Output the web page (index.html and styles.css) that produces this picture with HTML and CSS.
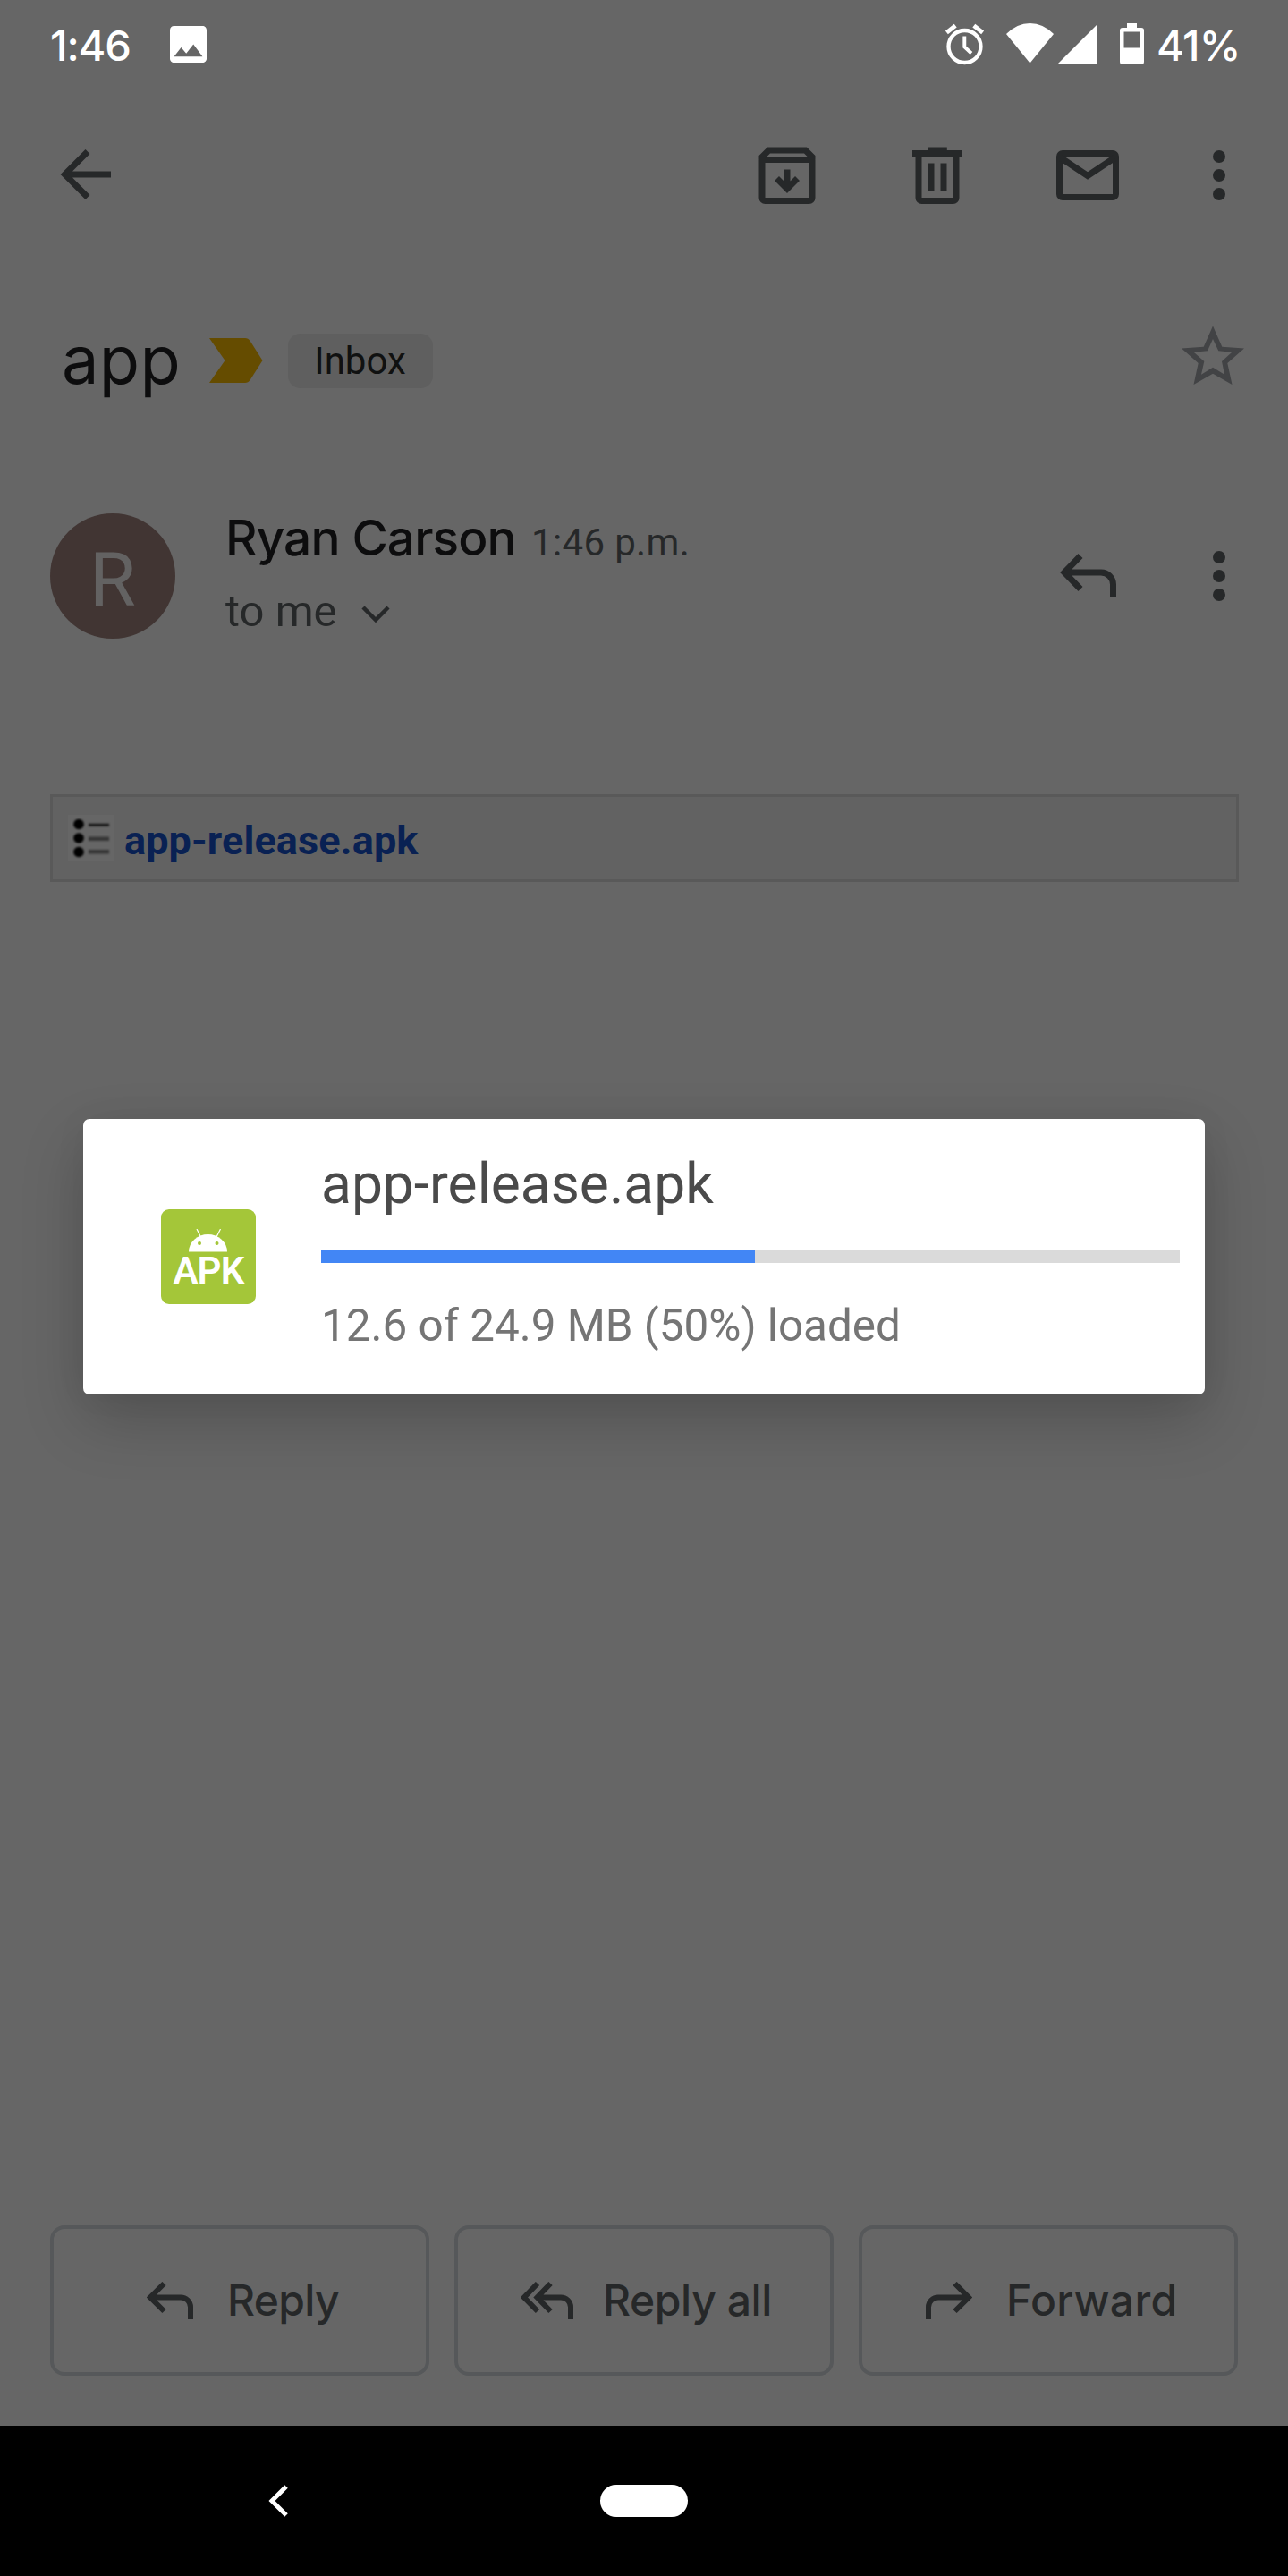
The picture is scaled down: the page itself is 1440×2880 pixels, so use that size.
FILE: index.html
```html
<!DOCTYPE html>
<html lang="en">
<head>
<meta charset="utf-8">
<title>app</title>
<link rel="stylesheet" href="styles.css">
</head>
<body>
<div class="screen">
  <header class="status">
    <div class="status-left">
      <span class="clock">1:46</span>
      <svg class="i-image" viewBox="3 3 18 18"><path fill="currentColor" d="M21 19V5c0-1.100-.9-2-2-2H5c-1.100 0-2 .9-2 2v14c0 1.100.9 2 2 2h14c1.100 0 2-.9 2-2zM8.500 13.500l2.500 3.010L14.500 12l4.500 6H5l3.500-4.500z"/></svg>
    </div>
    <div class="status-right">
      <svg class="i-alarm" viewBox="0 0 43 45" fill="none" stroke="currentColor"><circle cx="21.500" cy="25" r="18" stroke-width="4.300"/><path stroke-width="4.800" d="M1.400 9.300L11.200 1.600M41.600 9.300L31.800 1.600"/><path stroke-width="3.900" d="M21.300 13.500V25.500L29 32.500"/></svg>
      <svg class="i-wifi" viewBox="0 0 53 45"><path fill="currentColor" d="M0 12Q12 0 26.500 0T53 12L26.500 44.500Z"/></svg>
      <svg class="i-signal" viewBox="0 0 44 44"><path fill="currentColor" d="M44 0V44H0Z"/></svg>
      <svg class="i-battery" viewBox="0 0 27 46"><path fill="currentColor" fill-rule="evenodd" d="M8 0h11v5h5a3 3 0 0 1 3 3v35a3 3 0 0 1-3 3H3a3 3 0 0 1-3-3V8a3 3 0 0 1 3-3h5zM4.500 9.500V27.500H22.800V9.500z"/></svg>
      <span class="percent">41%</span>
    </div>
  </header>

  <nav class="toolbar">
    <svg class="ic" viewBox="0 0 84 84" fill="none" stroke="currentColor" stroke-width="7"><path d="M70 42H19M44 16.500L18.500 42L44 67.500"/></svg>
    <div class="actions">
      <svg class="ic" viewBox="0 0 84 84" fill="none" stroke="currentColor" stroke-width="7"><path d="M14 24.500V67a3.500 3.500 0 0 0 3.500 3.500h49A3.500 3.500 0 0 0 70 67V24.500M11 24.500H73"/><path d="M14 24.500V21.500L21.500 14H62.500L70 21.500V24.500"/><path d="M42 35.500V56M30.500 45.500L42 57L53.500 45.500"/></svg>
      <svg class="ic" viewBox="0 0 84 84" fill="none" stroke="currentColor" stroke-width="7"><path d="M14 17.500H70M31.200 14H52.800M21 17.500V67a3.500 3.500 0 0 0 3.500 3.500h35A3.500 3.500 0 0 0 63 67V17.500M35 28.500V60M49 28.500V60"/></svg>
      <svg class="ic" viewBox="0 0 84 84" fill="none" stroke="currentColor" stroke-width="7"><rect x="10.500" y="17.500" width="63" height="49" rx="3.500"/><path d="M12 22.500L42 42.500L72 22.500"/></svg>
      <svg class="dots" viewBox="0 0 14 56" fill="currentColor"><circle cx="7" cy="7" r="7"/><circle cx="7" cy="28" r="7"/><circle cx="7" cy="49" r="7"/></svg>
    </div>
  </nav>

  <section class="subject">
    <span class="title">app</span>
    <svg class="marker" viewBox="0 0 60 50"><path fill="currentColor" d="M0 0H40Q43.500 0 45.500 3L59.500 25L45.500 47Q43.500 50 40 50H0L17.500 25Z"/></svg>
    <span class="chip">Inbox</span>
    <svg class="star" viewBox="1321 364 70 67"><path fill="currentColor" fill-rule="evenodd" d="M1356 364.500L1366.300 387.700L1391 389.500L1372.300 406L1377.500 430L1356 417.700L1334.500 430L1339.700 406L1321 389.500L1345.700 387.700ZM1356 379L1350 392.300L1334.700 393.700L1346.300 404L1343 418.700L1356 410.700L1369 418.700L1366 404L1377.300 393.700L1362.300 392.300Z"/></svg>
  </section>

  <section class="message">
    <div class="avatar">R</div>
    <div class="who">
      <div class="line"><span class="name">Ryan Carson</span><span class="time">1:46 p.m.</span></div>
      <div class="to"><span>to me</span><svg class="chev" viewBox="0 0 32 20" fill="none" stroke="currentColor" stroke-width="4.500"><path d="M2 2L16 16L30 2"/></svg></div>
    </div>
    <svg class="i-reply" viewBox="0 0 63 50" fill="none" stroke="currentColor" stroke-width="7"><path d="M23 2.500L5 21L23 39.500M5 21H46A13.500 13.500 0 0 1 59.500 34.500V49"/></svg>
    <svg class="dots" viewBox="0 0 14 56" fill="currentColor"><circle cx="7" cy="7" r="7"/><circle cx="7" cy="28" r="7"/><circle cx="7" cy="49" r="7"/></svg>
  </section>

  <a class="attachment">
    <svg class="file" viewBox="0 0 52 52"><rect width="52" height="52" fill="#666"/><g class="soft"><circle cx="12" cy="10.500" r="5.800"/><circle cx="12" cy="26" r="5.800"/><circle cx="12" cy="41.500" r="5.800"/><path d="M23 11.300H46" stroke="#161616" stroke-width="3"/><path d="M23 26.700H46M23 41.300H46" stroke="#363636" stroke-width="4.500"/></g></svg>
    <span class="attachment-name">app-release.apk</span>
  </a>

  <footer class="replies">
    <div class="btn reply"><svg width="52" height="42" viewBox="0 0 52 42" fill="none" stroke="currentColor" stroke-width="6"><path d="M19.500 2L4 17.500L19.500 33M4 17.500H38A11 11 0 0 1 49 28.500V42"/></svg><span>Reply</span></div>
    <div class="btn all"><svg width="59" height="42" viewBox="0 0 59 42" fill="none" stroke="currentColor" stroke-width="6"><path d="M19 2L4 17.500L19 33M33.500 2L18.500 17.500L33.500 33M18.500 17.500H45A11 11 0 0 1 56 28.500V42"/></svg><span>Reply all</span></div>
    <div class="btn forward"><svg width="52" height="42" viewBox="0 0 52 42" fill="none" stroke="currentColor" stroke-width="6"><path d="M32.500 2L48 17.500L32.500 33M48 17.500H14A11 11 0 0 0 3 28.500V42"/></svg><span>Forward</span></div>
  </footer>

  <div class="navbar">
    <svg class="nav-back" viewBox="0 0 22 36" fill="none" stroke="currentColor" stroke-width="5"><path d="M20 2L4 18L20 34"/></svg>
    <span class="pill"></span>
  </div>

  <div class="dialog">
    <div class="apk">
      <svg class="robot" viewBox="0 0 44 26"><path fill="#fff" d="M0 25.500A21.500 19.500 0 0 1 43 25.500Z"/><path d="M9 0L13.500 9M35.500 0L31 9" stroke="#fff" stroke-width="1.200"/><circle cx="12" cy="16" r="2" fill="#a4c639"/><circle cx="31.500" cy="16" r="2" fill="#a4c639"/></svg>
      <span>APK</span>
    </div>
    <div class="download">
      <div class="fname">app-release.apk</div>
      <div class="track"><div class="fill"></div></div>
      <div class="info">12.6 of 24.9 MB (50%) loaded</div>
    </div>
  </div>
</div>
</body>
</html>
```

FILE: styles.css
```css
* { box-sizing: border-box; }
body { margin: 0; background: #666; font-family: Roboto, "Liberation Sans", sans-serif; }
svg { display: block; flex: none; }
.screen { position: relative; width: 1440px; height: 2880px; display: flex; flex-direction: column; background: #666; color: #262829; overflow: hidden; white-space: nowrap; }

/* Status bar */
.status { height: 98px; padding: 0 56px; display: flex; justify-content: space-between; color: #fff; font: 500 47px/98px Inter, sans-serif; }
.status-left, .status-right { display: flex; align-items: flex-start; }
.clock { width: 134px; letter-spacing: -1.1px; padding-top: 2px; }
.i-image { width: 41px; height: 41px; margin-top: 29px; }
.i-alarm { width: 43px; height: 45px; margin: 26.5px 25.5px 0 0; overflow: visible; }
.i-wifi { width: 53px; height: 45px; margin: 26px 5px 0 0; }
.i-signal { width: 44px; height: 44px; margin: 26.5px 25px 0 0; }
.i-battery { width: 27px; height: 46px; margin: 26px 14px 0 0; }
.percent { width: 91px; letter-spacing: -.7px; padding-top: 2px; }

/* Toolbar */
.toolbar { height: 196px; padding: 0 70px 0 54px; display: flex; justify-content: space-between; align-items: center; }
.ic { width: 84px; height: 84px; }
.toolbar > .ic { margin-bottom: 3px; }
.actions { display: flex; align-items: center; gap: 84px; }
.actions .dots { margin-left: 14px; }
.dots { width: 14px; height: 56px; }

/* Subject */
.subject { height: 218px; padding: 0 49px 0 69px; display: flex; align-items: center; }
.title { width: 165px; font: 400 74px/100px Inter, sans-serif; letter-spacing: .3px; color: #0d0d0e; padding-bottom: 2px; }
.marker { width: 60px; height: 50px; color: #654c00; margin-right: 27.5px; }
.chip { width: 162px; height: 61px; border-radius: 14px; background: #5f5f5f; color: #101111; font-size: 42px; line-height: 61px; text-align: center; }
.star { width: 70px; height: 67px; margin: 0 0 12px auto; color: #424345; }

/* Message header */
.message { margin-top: 62px; height: 140px; padding: 0 70px 0 56px; display: flex; align-items: center; }
.avatar { width: 140px; height: 140px; border-radius: 50%; background: #413533; color: #636262; font-size: 84px; line-height: 149px; text-align: center; }
.who { flex: 1; margin-left: 56px; }
.line { height: 79px; display: flex; align-items: baseline; }
.name { font: 500 55px/56px Inter, sans-serif; letter-spacing: -.9px; color: #0d0d0e; width: 342px; }
.time { font-size: 42px; line-height: 50px; letter-spacing: .35px; }
.to { height: 63px; line-height: 60px; font-size: 49px; display: flex; align-items: center; gap: 27px; }
.chev { width: 32px; height: 20px; margin-top: 6px; }
.i-reply { width: 63px; height: 50px; margin-right: 108px; }

/* Attachment */
.attachment { margin: 174px 55px 0 56px; height: 98px; padding-left: 17px; border: 3px solid #595959; background: #626262; display: flex; align-items: center; gap: 11px; font-weight: 700; font-size: 45px; letter-spacing: .1px; color: #092153; }
.attachment-name { padding-top: 5px; }
.file { width: 52px; height: 52px; }
.soft { filter: blur(1.2px); }

/* Reply buttons */
.replies { margin-top: auto; padding: 0 56px 56px; display: grid; grid-template-columns: repeat(3, 424px); gap: 28px; font: 500 48px/58px Inter, sans-serif; }
.btn { height: 168px; border: 4px solid #56585a; border-radius: 16px; display: flex; align-items: center; }
.reply { padding-left: 104px; gap: 38px; letter-spacing: -.7px; }
.all { padding-left: 70px; gap: 33px; letter-spacing: -.4px; }
.forward { padding-left: 71px; gap: 38px; letter-spacing: .4px; }

/* System navigation */
.navbar { height: 168px; background: #000; color: #fff; display: flex; align-items: center; }
.nav-back { width: 22px; height: 36px; margin-left: 300px; }
.pill { width: 98px; height: 36px; border-radius: 18px; background: #fff; margin-left: 349px; }

/* Download dialog */
.dialog { position: absolute; left: 93px; top: 1251px; width: 1254px; height: 308px; padding: 0 28px 0 87px; border-radius: 7px; background: #fff; display: flex; align-items: center; box-shadow: 0 28px 70px rgba(0,0,0,.2), 0 0 40px rgba(0,0,0,.04); }
.apk { width: 106px; height: 106px; border-radius: 9px; background: #a4c639; color: #fff; font-weight: 600; font-size: 42px; line-height: 41px; letter-spacing: -.8px; display: flex; flex-direction: column; align-items: center; padding-top: 22px; }
.robot { width: 44px; height: 26px; }
.download { margin-left: 73px; width: 960px; height: 308px; }
.fname { height: 147px; padding-top: 37px; font-size: 62.3px; line-height: 72px; color: #4a4a4a; }
.track { height: 14px; background: #dadada; }
.fill { width: 485px; height: 14px; background: #4286f5; }
.info { padding-top: 41px; font-size: 49.4px; line-height: 58px; color: #757575; }
```
